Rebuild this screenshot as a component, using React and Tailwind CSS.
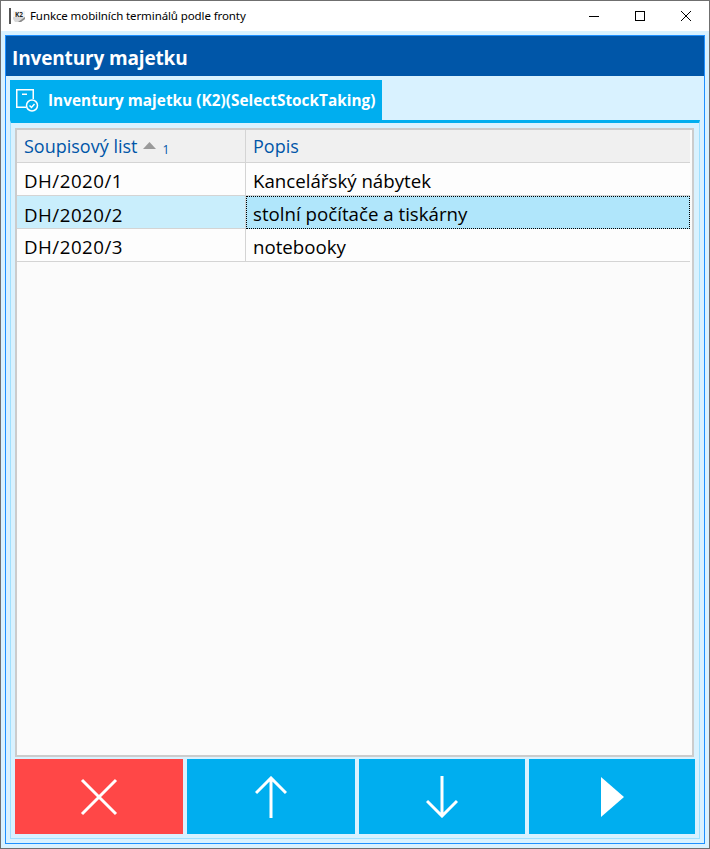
import React from 'react';

const rows = [
    { id: 'DH/2020/1', text: 'Kancelářský nábytek' },
    { id: 'DH/2020/2', text: 'stolní počítače a tiskárny', selected: true },
    { id: 'DH/2020/3', text: 'notebooky' },
];

const AppIcon = () => (
    <div className="flex items-center">
        <div className="w-[2px] h-[16px] bg-[#555]" />
        <svg width="14" height="14" viewBox="0 0 14 14" className="ml-[1px]">
            <path d="M1 2H13V10L9 13H3L1 10Z" fill="#d8d8d8" />
            <path d="M6 13L13 8V10L9 13Z" fill="#8a8a8a" />
            <rect x="1" y="2" width="12" height="6" fill="#f4f4f4" />
            <text x="7" y="7.5" textAnchor="middle" fontSize="6.5" fontWeight="700" fill="#222">K2</text>
        </svg>
    </div>
);

const TabIcon = () => (
    <svg width="23" height="23" viewBox="0 0 23 23" fill="none" stroke="white" strokeWidth="1.5">
        <path d="M10 18.25H0.75V0.75H17.25V10" />
        <path d="M6 5.25H11" />
        <circle cx="16" cy="16.5" r="5.5" />
        <path d="M13.5 16.5L15.5 18.5L18.5 15" />
    </svg>
);

const ActionButton = ({ className, children }) => (
    <button className={`h-[75px] flex items-center justify-center ${className}`}>{children}</button>
);

export default function App() {
    return (
        <div className="w-[710px] h-[849px] flex flex-col border border-[#6f6f6f] bg-[#d9f2ff] font-['Open_Sans','Noto_Sans',sans-serif] overflow-hidden">
            {/* title bar */}
            <div className="h-[30px] shrink-0 bg-white flex items-center pl-[8px]">
                <AppIcon />
                <span className="ml-[4px] text-[11.5px] text-black font-['Noto_Sans',sans-serif] tracking-[-0.1px]">
                    Funkce mobilních terminálů podle fronty
                </span>
                <div className="ml-auto flex items-center h-full">
                    <svg width="12" height="12" viewBox="0 0 12 12" className="mr-[34px]" stroke="black" fill="none">
                        <path d="M1 6.5H11" />
                    </svg>
                    <svg width="12" height="12" viewBox="0 0 12 12" className="mr-[34px]" stroke="black" fill="none">
                        <rect x="1.5" y="1.5" width="9" height="9" />
                    </svg>
                    <svg width="12" height="12" viewBox="0 0 12 12" className="mr-[17px]" stroke="black" fill="none">
                        <path d="M1 1L11 11M11 1L1 11" />
                    </svg>
                </div>
            </div>

            <div className="flex-1 min-h-0 flex flex-col p-[4px]">
                <div className="flex-1 min-h-0 flex flex-col border border-[#1e90ff]">
                    {/* heading */}
                    <div className="h-[40px] shrink-0 bg-[#0056a8] flex items-center pl-[6px] pt-[4px]">
                        <h1 className="text-[19px] font-bold text-white tracking-[-0.15px]">Inventury majetku</h1>
                    </div>

                    <div className="flex-1 min-h-0 flex flex-col p-[4px]">
                        {/* tab */}
                        <div className="h-[40px] w-[372px] shrink-0 bg-[#00aeef] flex items-center pl-[6px]">
                            <TabIcon />
                            <span className="ml-[9px] text-[15.3px] font-bold text-white whitespace-nowrap tracking-[0.05px]">
                                Inventury majetku (K2)(SelectStockTaking)
                            </span>
                        </div>
                        <div className="flex-1 min-h-0 flex flex-col border border-[#9fe0ff] border-t-[3px] border-t-[#00aeef] px-[4px] pt-[5px] pb-[4px]">
                            {/* grid */}
                            <div className="flex-1 min-h-0 mr-[1px] bg-[#fbfbfb] border-2 border-[#cccccc]">
                                <div className="mr-[2px]">
                                    <div className="grid grid-cols-[229px_1fr] h-[33px] bg-[#f0f0f0] border-b border-[#d4d4d4] text-[#0056a8] text-[18px]">
                                        <div className="flex items-center pl-[7px] pt-[1px] border-r border-[#d4d4d4]">
                                            <span>Soupisový list</span>
                                            <svg width="13" height="7" viewBox="0 0 13 7" className="ml-[6px] mb-[2px]">
                                                <path d="M0 7L6.5 0L13 7Z" fill="#9a9a9a" />
                                            </svg>
                                            <span className="ml-[6px] mt-[6px] text-[12px]">1</span>
                                        </div>
                                        <div className="flex items-center pl-[7px] pt-[1px]">Popis</div>
                                    </div>
                                    {rows.map(row => (
                                        <div
                                            key={row.id}
                                            className={`grid grid-cols-[229px_1fr] h-[33px] border-b border-[#d4d4d4] text-black text-[18.7px] ${row.selected ? 'bg-[#c9eefc]' : 'bg-[#fdfdfd]'}`}
                                        >
                                            <div className="flex items-center pl-[7px] pt-[4px] border-r border-[#d4d4d4] tracking-[0.5px]">{row.id}</div>
                                            {row.selected ? (
                                                <div className="flex items-center pl-[6px] pt-[3px] bg-[#b0e6fb] border border-dotted border-black">{row.text}</div>
                                            ) : (
                                                <div className="flex items-center pl-[7px] pt-[4px]">{row.text}</div>
                                            )}
                                        </div>
                                    ))}
                                </div>
                            </div>

                            {/* actions */}
                            <div className="shrink-0 flex gap-[4px] mt-[2px]">
                                <ActionButton className="w-[168px] bg-[#ff4747]">
                                    <svg width="38" height="38" viewBox="0 0 38 38" stroke="white" strokeWidth="3" fill="none">
                                        <path d="M2 2L36 36M36 2L2 36" />
                                    </svg>
                                </ActionButton>
                                <ActionButton className="w-[168px] bg-[#00aeef]">
                                    <svg width="32" height="42" viewBox="0 0 32 42" stroke="white" strokeWidth="3" fill="none">
                                        <path d="M16 42V2M1 17L16 2L31 17" />
                                    </svg>
                                </ActionButton>
                                <ActionButton className="w-[166px] bg-[#00aeef]">
                                    <svg width="32" height="42" viewBox="0 0 32 42" stroke="white" strokeWidth="3" fill="none">
                                        <path d="M16 0V40M1 25L16 40L31 25" />
                                    </svg>
                                </ActionButton>
                                <ActionButton className="w-[166px] bg-[#00aeef]">
                                    <svg width="23" height="40" viewBox="0 0 23 40">
                                        <path d="M0 0L23 20L0 40Z" fill="white" />
                                    </svg>
                                </ActionButton>
                            </div>
                        </div>
                    </div>
                </div>
            </div>
        </div>
    );
}
